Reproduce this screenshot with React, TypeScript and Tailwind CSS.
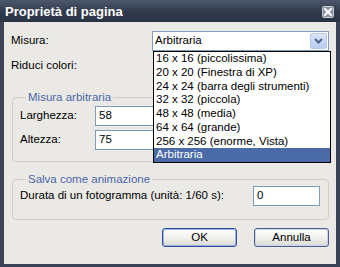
import React from 'react';

const sizes = [
  '16 x 16 (piccolissima)',
  '20 x 20 (Finestra di XP)',
  '24 x 24 (barra degli strumenti)',
  '32 x 32 (piccola)',
  '48 x 48 (media)',
  '64 x 64 (grande)',
  '256 x 256 (enorme, Vista)',
  'Arbitraria',
];

const font = { fontFamily: '"Liberation Sans", Arial, sans-serif' };

const TextBox: React.FC<{ value: string; className?: string }> = ({ value, className }) => (
  <div className={`h-[20px] bg-white border border-[#7f9db9] flex items-center pl-[3px] text-black ${className ?? ''}`}>
    {value}
  </div>
);

const Button: React.FC<{ label: string; primary?: boolean }> = ({ label, primary }) => (
  <div
    className={`w-[75px] h-[19px] rounded-[3px] border flex items-center justify-center text-black bg-gradient-to-b from-[#ffffff] via-[#f1f1ee] to-[#d9d8d2] ${
      primary ? 'border-[#2c4f98] shadow-[inset_0_0_0_1px_#9bb4e6]' : 'border-[#4b5f8f] shadow-[inset_0_0_0_1px_#c9d3ea]'
    }`}
  >
    {label}
  </div>
);

export default function App() {
  return (
    <div className="w-[340px] h-[267px] bg-[#3a4456] flex flex-col select-none" style={font}>
      {/* title bar */}
      <div className="h-[22px] shrink-0 bg-gradient-to-b from-[#4d586d] via-[#323c4e] to-[#2a3343] flex items-center justify-between pl-[5px] pr-[6px]">
        <span className="text-[13px] font-bold text-white leading-none">Proprietà di pagina</span>
        <div className="w-[12px] h-[12px] mt-[1px] rounded-[2px] bg-[#8d95a3] border border-[#c4c9d2] flex items-center justify-center">
          <svg width="8" height="8" viewBox="0 0 8 8">
            <path d="M1 1 L7 7 M7 1 L1 7" stroke="#ffffff" strokeWidth="2" strokeLinecap="square" />
          </svg>
        </div>
      </div>

      {/* body */}
      <div className="relative flex-1 mx-[4px] mb-[3px] bg-[#ebe9e6] pt-[9px] px-[7px] text-[11.5px] text-black">
        <div className="flex items-center h-[20px]">
          <span className="w-[142px]">Misura:</span>
          <div className="w-[178px] h-[20px] bg-white border border-[#7f9db9] flex items-center pl-[2px] pr-[1px]">
            <span className="flex-1">Arbitraria</span>
            <div className="w-[17px] h-[16px] rounded-[2px] border border-[#b6c7ec] bg-gradient-to-b from-[#dce6fb] to-[#b8caef] flex items-center justify-center">
              <svg width="9" height="6" viewBox="0 0 9 6">
                <path d="M1 1 L4.5 4.5 L8 1" fill="none" stroke="#4d6185" strokeWidth="2" />
              </svg>
            </div>
          </div>
        </div>

        <div className="flex items-center h-[20px] mt-[5px]">
          <span>Riduci colori:</span>
        </div>

        <fieldset className="ml-[1px] mt-[14px] w-[317px] border border-[#d0d0bf] rounded-[4px] pl-[7px] pt-[2px] pb-[11px]">
          <legend className="ml-[6px] px-[2px] leading-[14px] text-[#4a66a6]">Misura arbitraria</legend>
          <div className="flex items-center">
            <span className="w-[75px]">Larghezza:</span>
            <TextBox value="58" className="w-[70px]" />
          </div>
          <div className="flex items-center mt-[4px]">
            <span className="w-[75px]">Altezza:</span>
            <TextBox value="75" className="w-[70px]" />
          </div>
        </fieldset>

        <fieldset className="ml-[1px] mt-[10px] w-[317px] border border-[#d0d0bf] rounded-[4px] pl-[7px] pb-[13px]">
          <legend className="ml-[6px] px-[2px] leading-[14px] text-[#4a66a6]">Salva come animazione</legend>
          <div className="flex items-center">
            <span className="w-[233px]">Durata di un fotogramma (unità: 1/60 s):</span>
            <TextBox value="0" className="w-[67px]" />
          </div>
        </fieldset>

        <div className="flex justify-end gap-[17px] mt-[8px]">
          <Button label="OK" primary />
          <Button label="Annulla" />
        </div>

        {/* open dropdown list */}
        <div className="absolute left-[149px] top-[29px] w-[178px] bg-white border border-black">
          {sizes.map((s, i) => (
            <div
              key={s}
              className={`h-[13.75px] leading-[13.75px] pl-[2px] ${
                i === sizes.length - 1 ? 'bg-[#4b6aa8] text-white' : 'text-black'
              }`}
            >
              {s}
            </div>
          ))}
        </div>
      </div>
    </div>
  );
}
